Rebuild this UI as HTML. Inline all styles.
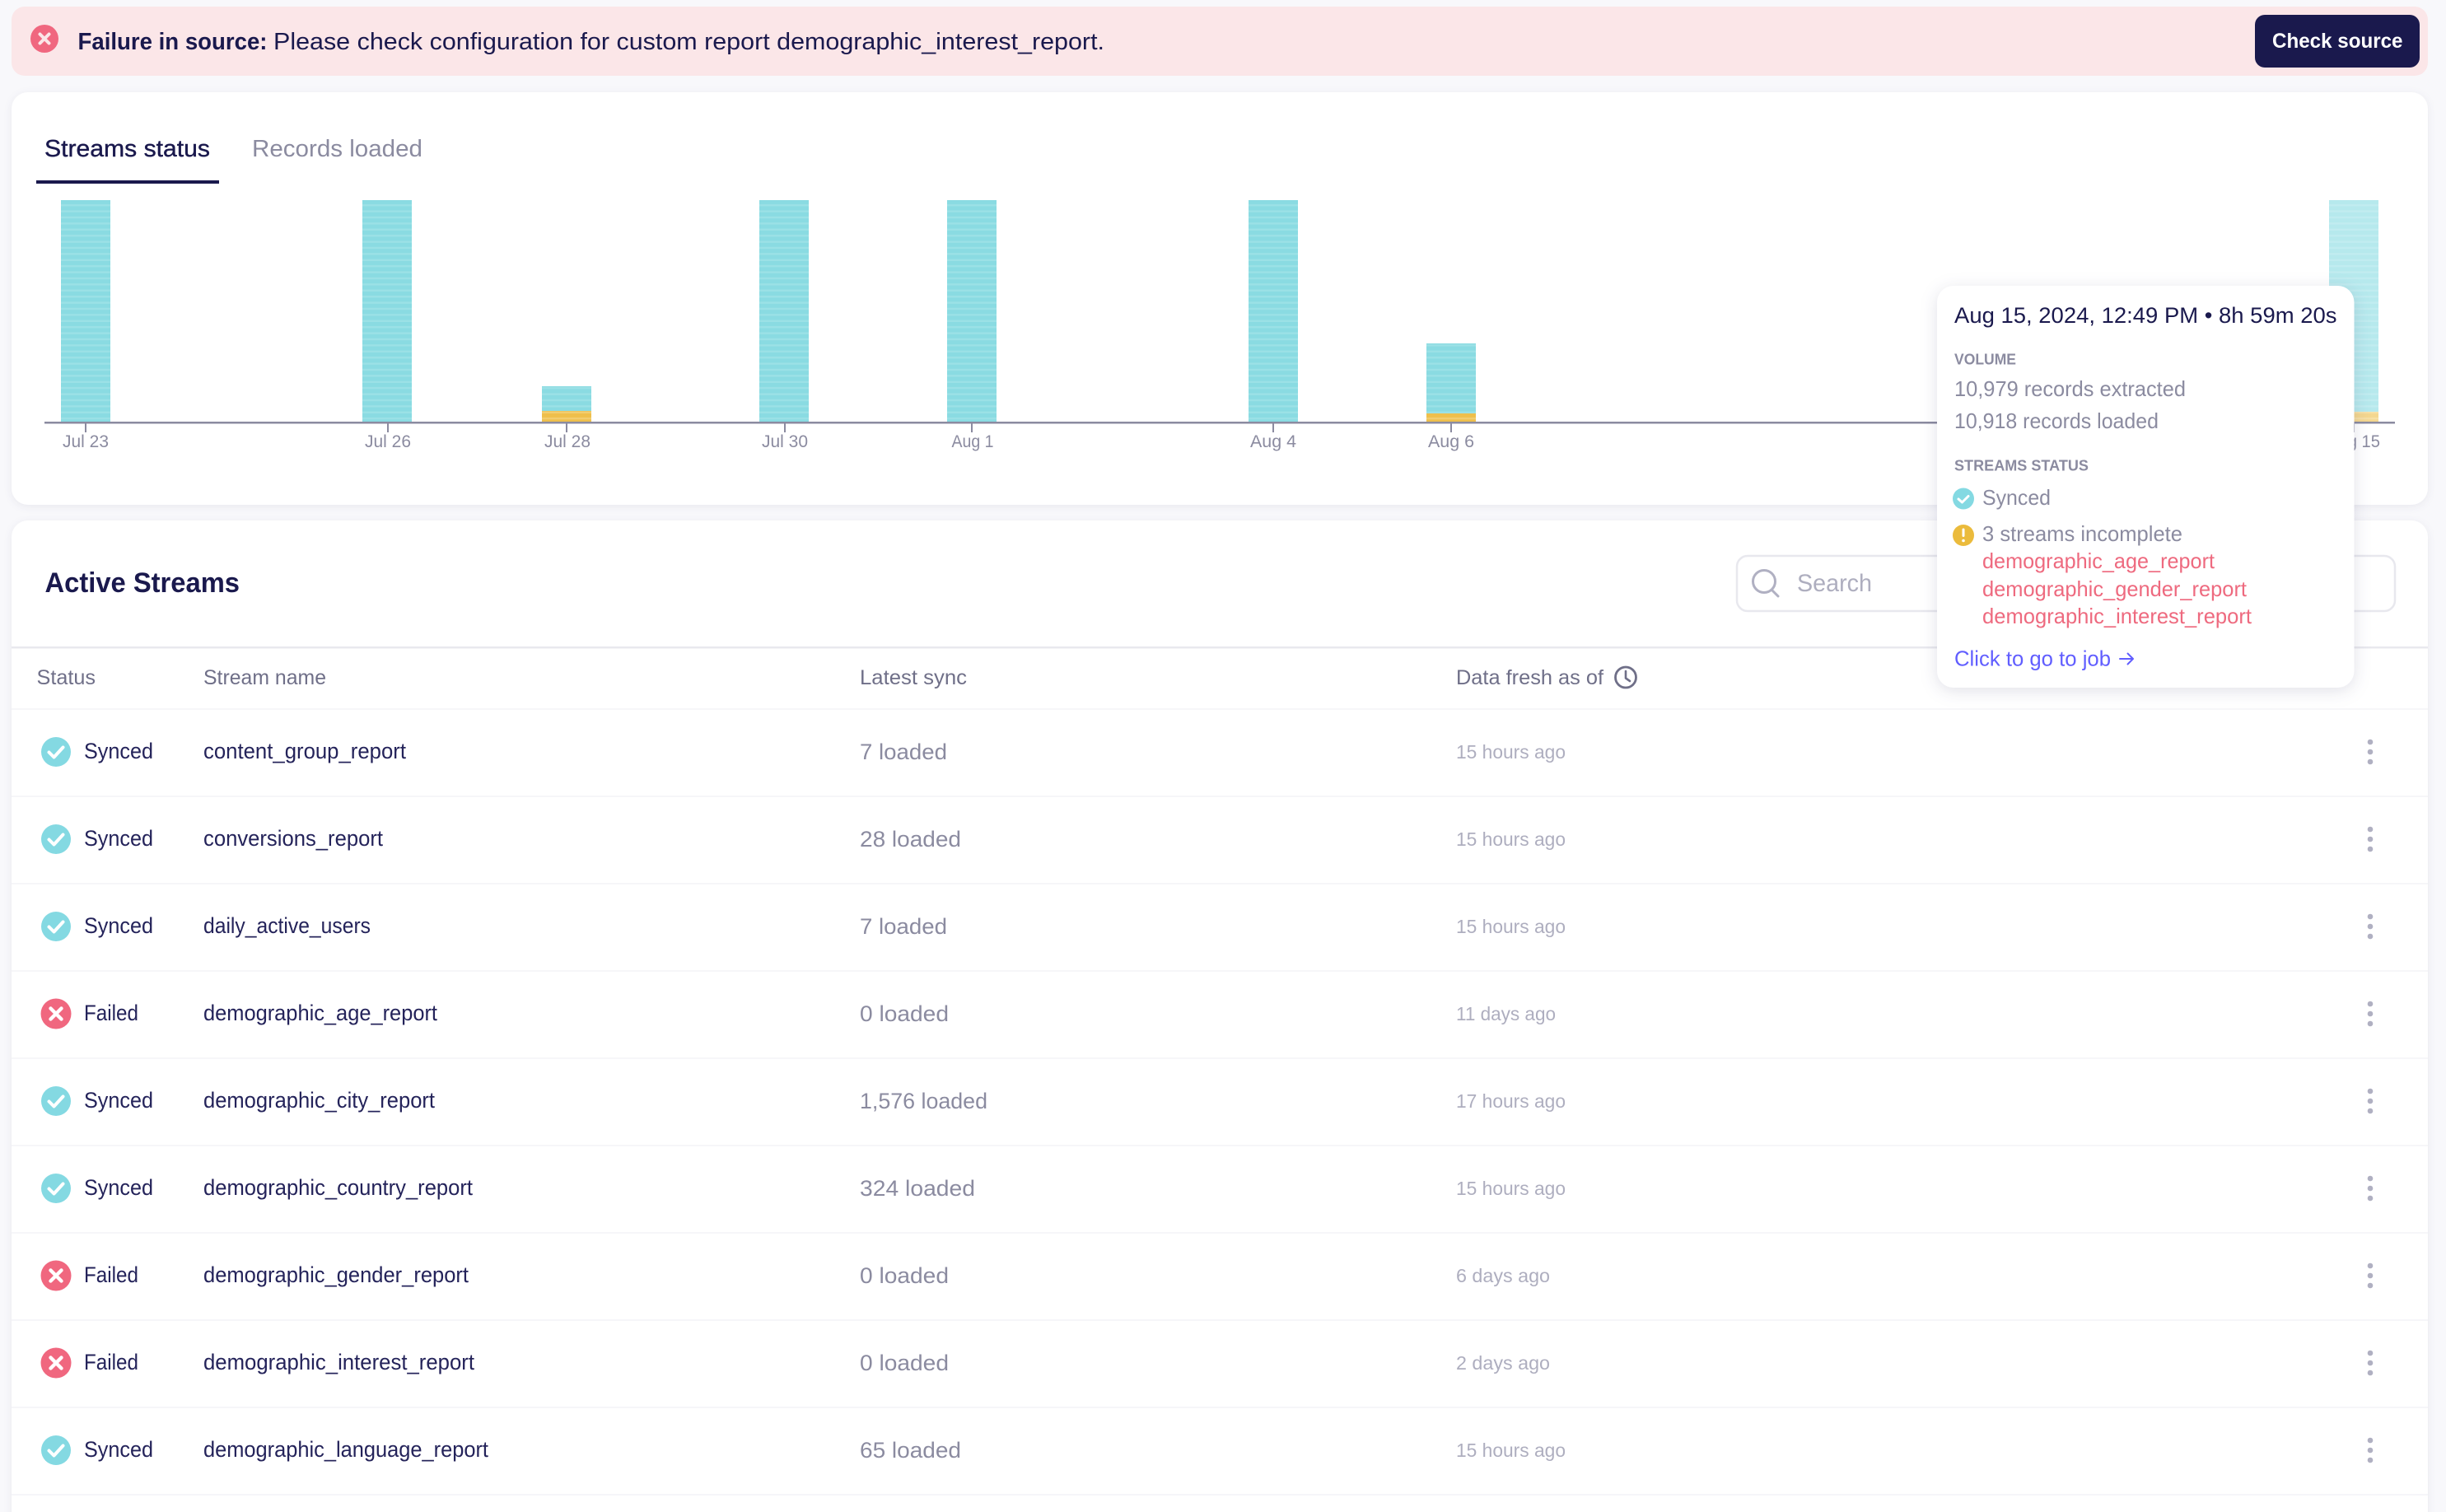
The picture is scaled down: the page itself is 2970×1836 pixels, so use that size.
<!DOCTYPE html>
<html lang="en">
<head>
<meta charset="utf-8">
<title>Streams status</title>
<style>
html,body{margin:0;padding:0;background:#f8f8fb;width:2970px;height:1836px;overflow:hidden}
svg{display:block;font-family:"Liberation Sans",sans-serif}
.nm{font-size:27px;fill:#24235a}
.hd{font-size:25px;fill:#6f6f88}
.ld{font-size:27px;fill:#8b8ba0}
.ag{font-size:23px;fill:#aeaebf}
.ax{font-size:21px;fill:#8b8ba0;text-anchor:middle}
.tg{font-size:26px;fill:#8b8ba0}
.tr{font-size:26px;fill:#ee6a7f}
.tc{font-size:18px;fill:#8b8ba0;font-weight:700}
</style>
</head>
<body>
<svg width="2970" height="1836" viewBox="0 0 2970 1836" xmlns="http://www.w3.org/2000/svg">
<defs>
<pattern id="st" patternUnits="userSpaceOnUse" width="10" height="7.4" y="243">
<rect width="10" height="7.4" fill="#8adbe2"/><rect y="5" width="10" height="2.4" fill="#9be1e6"/>
</pattern>
<pattern id="ye" patternUnits="userSpaceOnUse" width="10" height="7.4" y="243">
<rect width="10" height="7.4" fill="#eebf4c"/><rect y="5" width="10" height="2.4" fill="#f2cd70"/>
</pattern>
<g id="ok"><circle r="18" fill="#84d9e2"/><path d="M-8.5 0.5L-2.5 6.5L8.5 -5.5" fill="none" stroke="#fff" stroke-width="4" stroke-linecap="round" stroke-linejoin="round"/></g>
<g id="no"><circle r="18.5" fill="#f0677f"/><path d="M-6.5 -6.5L6.5 6.5M6.5 -6.5L-6.5 6.5" fill="none" stroke="#fff" stroke-width="4.4" stroke-linecap="round"/></g>
<g id="kb" fill="#b0b0c2"><circle cy="-12" r="3.3"/><circle r="3.3"/><circle cy="12" r="3.3"/></g>
</defs>

<rect x="14" y="8" width="2934" height="84" rx="16" fill="#fbe6e8"/>
<circle cx="54" cy="47" r="17" fill="#f0677f"/>
<path d="M48.5 41.500L59.500 52.500M59.500 41.500L48.500 52.500" fill="none" stroke="#fbe6e8" stroke-width="4" stroke-linecap="round"/>
<text x="94.500" y="60" font-size="29" font-weight="700" fill="#1a194d" textLength="230" lengthAdjust="spacingAndGlyphs">Failure in source:</text>
<text x="332" y="60" font-size="29" fill="#1a194d" textLength="1009" lengthAdjust="spacingAndGlyphs">Please check configuration for custom report demographic_interest_report.</text>
<rect x="2738" y="18" width="200" height="64" rx="12" fill="#1a194d"/>
<text x="2759" y="58" font-size="25" font-weight="700" fill="#fff" textLength="158.500" lengthAdjust="spacingAndGlyphs">Check source</text>

<rect x="14" y="112" width="2934" height="501" rx="20" fill="#fff" style="filter:drop-shadow(0 2px 5px rgba(26,25,77,.07))"/>
<text x="54" y="190" font-size="29" fill="#1a194d" stroke="#1a194d" stroke-width=".4" textLength="201" lengthAdjust="spacingAndGlyphs">Streams status</text>
<text x="306" y="190" font-size="29" fill="#8b8ba0" textLength="207" lengthAdjust="spacingAndGlyphs">Records loaded</text>
<rect x="44" y="219" width="222" height="4" fill="#1a194d"/>

<g fill="url(#st)">
<rect x="74" y="243" width="60" height="269"/>
<rect x="440" y="243" width="60" height="269"/>
<rect x="658" y="469" width="60" height="30"/>
<rect x="922" y="243" width="60" height="269"/>
<rect x="1150" y="243" width="60" height="269"/>
<rect x="1516" y="243" width="60" height="269"/>
<rect x="1732" y="417" width="60" height="85"/>
<rect x="2828" y="243" width="60" height="257" opacity=".62"/>
</g>
<g fill="url(#ye)">
<rect x="658" y="499" width="60" height="13"/>
<rect x="1732" y="502" width="60" height="10"/>
<rect x="2828" y="500" width="60" height="12" opacity=".62"/>
</g>
<rect x="54" y="512" width="2854" height="2.500" fill="#8b8ba0"/>
<g fill="#8b8ba0">
<rect x="103" y="514" width="2" height="11"/><rect x="470" y="514" width="2" height="11"/><rect x="687" y="514" width="2" height="11"/><rect x="952" y="514" width="2" height="11"/><rect x="1179" y="514" width="2" height="11"/><rect x="1545" y="514" width="2" height="11"/><rect x="1761" y="514" width="2" height="11"/><rect x="2857" y="514" width="2" height="11"/>
</g>
<text class="ax" x="104" y="543" textLength="56" lengthAdjust="spacingAndGlyphs">Jul 23</text>
<text class="ax" x="471" y="543" textLength="56" lengthAdjust="spacingAndGlyphs">Jul 26</text>
<text class="ax" x="689" y="543" textLength="56" lengthAdjust="spacingAndGlyphs">Jul 28</text>
<text class="ax" x="953" y="543" textLength="56" lengthAdjust="spacingAndGlyphs">Jul 30</text>
<text class="ax" x="1181" y="543" textLength="51" lengthAdjust="spacingAndGlyphs">Aug 1</text>
<text class="ax" x="1546" y="543" textLength="56" lengthAdjust="spacingAndGlyphs">Aug 4</text>
<text class="ax" x="1762" y="543" textLength="56" lengthAdjust="spacingAndGlyphs">Aug 6</text>
<text class="ax" x="2858" y="543" textLength="64" lengthAdjust="spacingAndGlyphs">Aug 15</text>

<rect x="14" y="632" width="2934" height="1240" rx="20" fill="#fff" style="filter:drop-shadow(0 2px 5px rgba(26,25,77,.07))"/>
<text x="54.500" y="719" font-size="34" font-weight="700" fill="#1a194d" textLength="236.500" lengthAdjust="spacingAndGlyphs">Active Streams</text>
<rect x="2109" y="675" width="799" height="67" rx="13" fill="#fff" stroke="#e8e8ee" stroke-width="2.500"/>
<circle cx="2142" cy="706" r="13.500" fill="none" stroke="#b0b0c2" stroke-width="3"/>
<path d="M2152 717L2159 724" stroke="#b0b0c2" stroke-width="3" stroke-linecap="round"/>
<text x="2182" y="718" font-size="30" fill="#aeaebf" textLength="91" lengthAdjust="spacingAndGlyphs">Search</text>

<rect x="14" y="785" width="2934" height="2.500" fill="#e9e9ee"/>
<text class="hd" x="44.500" y="831" textLength="71.500" lengthAdjust="spacingAndGlyphs">Status</text>
<text class="hd" x="247" y="831" textLength="149" lengthAdjust="spacingAndGlyphs">Stream name</text>
<text class="hd" x="1044" y="831" textLength="130" lengthAdjust="spacingAndGlyphs">Latest sync</text>
<text class="hd" x="1768" y="831" textLength="179" lengthAdjust="spacingAndGlyphs">Data fresh as of</text>
<circle cx="1974" cy="822.500" r="12.500" fill="none" stroke="#6f6f88" stroke-width="2.800"/>
<path d="M1974 815V823.500L1979 827" fill="none" stroke="#6f6f88" stroke-width="2.600" stroke-linecap="round" stroke-linejoin="round"/>

<g fill="#f6f6f9">
<rect x="14" y="860" width="2934" height="2"/><rect x="14" y="966" width="2934" height="2"/><rect x="14" y="1072" width="2934" height="2"/><rect x="14" y="1178" width="2934" height="2"/><rect x="14" y="1284" width="2934" height="2"/><rect x="14" y="1390" width="2934" height="2"/><rect x="14" y="1496" width="2934" height="2"/><rect x="14" y="1602" width="2934" height="2"/><rect x="14" y="1708" width="2934" height="2"/><rect x="14" y="1814" width="2934" height="2"/>
</g>

<use href="#ok" x="68" y="913"/><text class="nm" x="102" y="921" textLength="84" lengthAdjust="spacingAndGlyphs">Synced</text>
<text class="nm" x="247" y="921" textLength="246" lengthAdjust="spacingAndGlyphs">content_group_report</text>
<text class="ld" x="1044" y="922" textLength="106" lengthAdjust="spacingAndGlyphs">7 loaded</text>
<text class="ag" x="1768" y="921" textLength="133" lengthAdjust="spacingAndGlyphs">15 hours ago</text>
<use href="#kb" x="2878" y="913"/>

<use href="#ok" x="68" y="1019"/><text class="nm" x="102" y="1027" textLength="84" lengthAdjust="spacingAndGlyphs">Synced</text>
<text class="nm" x="247" y="1027" textLength="218" lengthAdjust="spacingAndGlyphs">conversions_report</text>
<text class="ld" x="1044" y="1028" textLength="123" lengthAdjust="spacingAndGlyphs">28 loaded</text>
<text class="ag" x="1768" y="1027" textLength="133" lengthAdjust="spacingAndGlyphs">15 hours ago</text>
<use href="#kb" x="2878" y="1019"/>

<use href="#ok" x="68" y="1125"/><text class="nm" x="102" y="1133" textLength="84" lengthAdjust="spacingAndGlyphs">Synced</text>
<text class="nm" x="247" y="1133" textLength="203" lengthAdjust="spacingAndGlyphs">daily_active_users</text>
<text class="ld" x="1044" y="1134" textLength="106" lengthAdjust="spacingAndGlyphs">7 loaded</text>
<text class="ag" x="1768" y="1133" textLength="133" lengthAdjust="spacingAndGlyphs">15 hours ago</text>
<use href="#kb" x="2878" y="1125"/>

<use href="#no" x="68" y="1231"/><text class="nm" x="102" y="1239" textLength="66" lengthAdjust="spacingAndGlyphs">Failed</text>
<text class="nm" x="247" y="1239" textLength="284" lengthAdjust="spacingAndGlyphs">demographic_age_report</text>
<text class="ld" x="1044" y="1240" textLength="108" lengthAdjust="spacingAndGlyphs">0 loaded</text>
<text class="ag" x="1768" y="1239" textLength="121" lengthAdjust="spacingAndGlyphs">11 days ago</text>
<use href="#kb" x="2878" y="1231"/>

<use href="#ok" x="68" y="1337"/><text class="nm" x="102" y="1345" textLength="84" lengthAdjust="spacingAndGlyphs">Synced</text>
<text class="nm" x="247" y="1345" textLength="281" lengthAdjust="spacingAndGlyphs">demographic_city_report</text>
<text class="ld" x="1044" y="1346" textLength="155" lengthAdjust="spacingAndGlyphs">1,576 loaded</text>
<text class="ag" x="1768" y="1345" textLength="133" lengthAdjust="spacingAndGlyphs">17 hours ago</text>
<use href="#kb" x="2878" y="1337"/>

<use href="#ok" x="68" y="1443"/><text class="nm" x="102" y="1451" textLength="84" lengthAdjust="spacingAndGlyphs">Synced</text>
<text class="nm" x="247" y="1451" textLength="327" lengthAdjust="spacingAndGlyphs">demographic_country_report</text>
<text class="ld" x="1044" y="1452" textLength="140" lengthAdjust="spacingAndGlyphs">324 loaded</text>
<text class="ag" x="1768" y="1451" textLength="133" lengthAdjust="spacingAndGlyphs">15 hours ago</text>
<use href="#kb" x="2878" y="1443"/>

<use href="#no" x="68" y="1549"/><text class="nm" x="102" y="1557" textLength="66" lengthAdjust="spacingAndGlyphs">Failed</text>
<text class="nm" x="247" y="1557" textLength="322" lengthAdjust="spacingAndGlyphs">demographic_gender_report</text>
<text class="ld" x="1044" y="1558" textLength="108" lengthAdjust="spacingAndGlyphs">0 loaded</text>
<text class="ag" x="1768" y="1557" textLength="114" lengthAdjust="spacingAndGlyphs">6 days ago</text>
<use href="#kb" x="2878" y="1549"/>

<use href="#no" x="68" y="1655"/><text class="nm" x="102" y="1663" textLength="66" lengthAdjust="spacingAndGlyphs">Failed</text>
<text class="nm" x="247" y="1663" textLength="329" lengthAdjust="spacingAndGlyphs">demographic_interest_report</text>
<text class="ld" x="1044" y="1664" textLength="108" lengthAdjust="spacingAndGlyphs">0 loaded</text>
<text class="ag" x="1768" y="1663" textLength="114" lengthAdjust="spacingAndGlyphs">2 days ago</text>
<use href="#kb" x="2878" y="1655"/>

<use href="#ok" x="68" y="1761"/><text class="nm" x="102" y="1769" textLength="84" lengthAdjust="spacingAndGlyphs">Synced</text>
<text class="nm" x="247" y="1769" textLength="346" lengthAdjust="spacingAndGlyphs">demographic_language_report</text>
<text class="ld" x="1044" y="1770" textLength="123" lengthAdjust="spacingAndGlyphs">65 loaded</text>
<text class="ag" x="1768" y="1769" textLength="133" lengthAdjust="spacingAndGlyphs">15 hours ago</text>
<use href="#kb" x="2878" y="1761"/>

<rect x="2352" y="347" width="506.500" height="488" rx="20" fill="#fff" style="filter:drop-shadow(0 4px 10px rgba(26,25,77,.13))"/>
<text x="2373" y="392" font-size="27" fill="#1a194d" textLength="464.500" lengthAdjust="spacingAndGlyphs">Aug 15, 2024, 12:49 PM • 8h 59m 20s</text>
<text class="tc" x="2373" y="442.500" textLength="75" lengthAdjust="spacingAndGlyphs">VOLUME</text>
<text class="tg" x="2373" y="481" textLength="281" lengthAdjust="spacingAndGlyphs">10,979 records extracted</text>
<text class="tg" x="2373" y="520" textLength="248" lengthAdjust="spacingAndGlyphs">10,918 records loaded</text>
<text class="tc" x="2373" y="571.500" textLength="163" lengthAdjust="spacingAndGlyphs">STREAMS STATUS</text>
<circle cx="2384" cy="605.500" r="13" fill="#84d9e2"/>
<path d="M2378 606L2382.500 610L2390 602.500" fill="none" stroke="#fff" stroke-width="3" stroke-linecap="round" stroke-linejoin="round"/>
<text class="tg" x="2407" y="613" textLength="83" lengthAdjust="spacingAndGlyphs">Synced</text>
<circle cx="2384" cy="650" r="13" fill="#ebbb3c"/>
<path d="M2384 643V650.500" stroke="#fff" stroke-width="3" stroke-linecap="round"/><circle cx="2384" cy="656.500" r="1.800" fill="#fff"/>
<text class="tg" x="2407" y="657" textLength="243" lengthAdjust="spacingAndGlyphs">3 streams incomplete</text>
<text class="tr" x="2407" y="690" textLength="282" lengthAdjust="spacingAndGlyphs">demographic_age_report</text>
<text class="tr" x="2407" y="724" textLength="321" lengthAdjust="spacingAndGlyphs">demographic_gender_report</text>
<text class="tr" x="2407" y="757" textLength="327" lengthAdjust="spacingAndGlyphs">demographic_interest_report</text>
<text x="2373" y="808.500" font-size="26" fill="#615eff" textLength="190" lengthAdjust="spacingAndGlyphs">Click to go to job</text>
<path d="M2574 800H2590M2583.500 793.500L2590 800L2583.500 806.500" fill="none" stroke="#615eff" stroke-width="2" stroke-linecap="round" stroke-linejoin="round"/>
</svg>
</body>
</html>
